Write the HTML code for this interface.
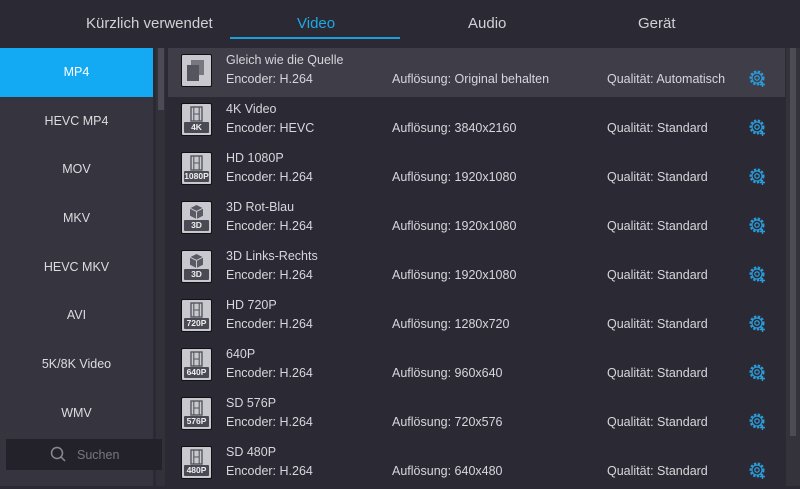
<!DOCTYPE html><html><head><style>
body{margin:0;width:800px;height:486px;background:#2b2a34;font-family:"Liberation Sans",sans-serif;overflow:hidden;position:relative;color:#d6d6dc}
.tab{position:absolute;top:15px;font-size:15px;color:#d0d0d6}
.side{position:absolute;left:0;top:48px;width:153px;height:438px;background:#36343f}
.si{height:48.7px;line-height:48.7px;text-align:center;font-size:12.5px;color:#dcdce0}
.si.a{background:#14aaf3;color:#fff}
.row{position:absolute;left:168px;width:617px;height:49px;font-size:12.5px}
.row.h{background:#3e3d48}
.ic{position:absolute;left:13px;top:6px;width:29px;height:31px;border:1px solid #111;background:#c8c8ce;border-radius:2px}
.lb{position:absolute;left:2px;right:2px;bottom:2px;height:11px;background:#4a4a55;color:#eee;font-size:8.5px;line-height:11px;text-align:center;font-weight:bold;border-radius:1px}
.t{position:absolute;left:58px;top:5px}
.e{position:absolute;left:58px;top:24px}
.r{position:absolute;left:224px;top:24px}
.q{position:absolute;left:439px;top:24px}
.g{position:absolute;left:580px;top:21px}
</style></head><body>
<div class="tab" style="left:86px">Kürzlich verwendet</div>
<div class="tab" style="left:297px;color:#1ea8e6">Video</div>
<div style="position:absolute;left:230px;top:37px;width:170px;height:2px;background:#1b9fdc"></div>
<div class="tab" style="left:468px">Audio</div>
<div class="tab" style="left:638px">Gerät</div>
<div class="side">
<div class="si a">MP4</div><div class="si">HEVC MP4</div><div class="si">MOV</div><div class="si">MKV</div><div class="si">HEVC MKV</div><div class="si">AVI</div><div class="si">5K/8K Video</div><div class="si">WMV</div>
</div>
<div style="position:absolute;left:156px;top:48px;width:9px;height:438px;background:#323139"></div>
<div style="position:absolute;left:158px;top:48px;width:6px;height:62px;background:#4b4a55"></div>
<div style="position:absolute;left:6px;top:439px;width:156px;height:31px;background:#23222a"></div>
<svg style="position:absolute;left:50px;top:446px" width="16" height="16"><circle cx="7" cy="7" r="5.5" fill="none" stroke="#8a8a92" stroke-width="1.5"/><path d="M11 11l4 4" stroke="#8a8a92" stroke-width="1.5"/></svg>
<div style="position:absolute;left:77px;top:448px;font-size:12.5px;color:#777780">Suchen</div>
<div style="position:absolute;left:786px;top:48px;width:14px;height:438px;background:#34333c"></div>
<div style="position:absolute;left:790px;top:48px;width:6px;height:388px;background:#4c4b56"></div>
<svg width="0" height="0" style="position:absolute"><defs>
<g id="gear"><circle cx="9" cy="9" r="6.5" fill="none" stroke="#2a9bd8" stroke-width="2" stroke-dasharray="2.4 1.5"/><circle cx="9" cy="9" r="5" fill="none" stroke="#2a9bd8" stroke-width="1.2"/><circle cx="9" cy="9" r="2.2" fill="none" stroke="#2a9bd8" stroke-width="1.3"/><path d="M12 15.5h5M14.5 13v5" stroke="#2a9bd8" stroke-width="1.4"/></g>
<g id="film"><rect x="9" y="3" width="11" height="14" fill="none" stroke="#55555e" stroke-width="1.4"/><path d="M11.8 3v14M17.2 3v14M11.8 10h5.4" stroke="#55555e" stroke-width="1.1"/></g>
<g id="cube"><path d="M14.5 3l6.5 3.2v7.6l-6.5 3.2-6.5-3.2V6.2z" fill="#5a5a64"/><path d="M8 6.2l6.5 3.2 6.5-3.2M14.5 9.4v7.6" stroke="#c8c8ce" stroke-width="1" fill="none"/></g>
</defs></svg>
<div class="row h" style="top:48px"><div class="ic"><div style="position:absolute;left:9px;top:5px;width:13px;height:15px;background:#77777f"></div><div style="position:absolute;left:5px;top:10px;width:12px;height:16px;background:#55555e"></div></div><div class="t">Gleich wie die Quelle</div><div class="e">Encoder: H.264</div><div class="r">Auflösung: Original behalten</div><div class="q">Qualität: Automatisch</div><svg class="g" width="20" height="20"><use href="#gear"/></svg></div>
<div class="row" style="top:97px"><div class="ic"><svg width="29" height="19"><use href="#film"/></svg><div class="lb">4K</div></div><div class="t">4K Video</div><div class="e">Encoder: HEVC</div><div class="r">Auflösung: 3840x2160</div><div class="q">Qualität: Standard</div><svg class="g" width="20" height="20"><use href="#gear"/></svg></div>
<div class="row" style="top:146px"><div class="ic"><svg width="29" height="19"><use href="#film"/></svg><div class="lb">1080P</div></div><div class="t">HD 1080P</div><div class="e">Encoder: H.264</div><div class="r">Auflösung: 1920x1080</div><div class="q">Qualität: Standard</div><svg class="g" width="20" height="20"><use href="#gear"/></svg></div>
<div class="row" style="top:195px"><div class="ic"><svg width="29" height="19"><use href="#cube"/></svg><div class="lb">3D</div></div><div class="t">3D Rot-Blau</div><div class="e">Encoder: H.264</div><div class="r">Auflösung: 1920x1080</div><div class="q">Qualität: Standard</div><svg class="g" width="20" height="20"><use href="#gear"/></svg></div>
<div class="row" style="top:244px"><div class="ic"><svg width="29" height="19"><use href="#cube"/></svg><div class="lb">3D</div></div><div class="t">3D Links-Rechts</div><div class="e">Encoder: H.264</div><div class="r">Auflösung: 1920x1080</div><div class="q">Qualität: Standard</div><svg class="g" width="20" height="20"><use href="#gear"/></svg></div>
<div class="row" style="top:293px"><div class="ic"><svg width="29" height="19"><use href="#film"/></svg><div class="lb">720P</div></div><div class="t">HD 720P</div><div class="e">Encoder: H.264</div><div class="r">Auflösung: 1280x720</div><div class="q">Qualität: Standard</div><svg class="g" width="20" height="20"><use href="#gear"/></svg></div>
<div class="row" style="top:342px"><div class="ic"><svg width="29" height="19"><use href="#film"/></svg><div class="lb">640P</div></div><div class="t">640P</div><div class="e">Encoder: H.264</div><div class="r">Auflösung: 960x640</div><div class="q">Qualität: Standard</div><svg class="g" width="20" height="20"><use href="#gear"/></svg></div>
<div class="row" style="top:391px"><div class="ic"><svg width="29" height="19"><use href="#film"/></svg><div class="lb">576P</div></div><div class="t">SD 576P</div><div class="e">Encoder: H.264</div><div class="r">Auflösung: 720x576</div><div class="q">Qualität: Standard</div><svg class="g" width="20" height="20"><use href="#gear"/></svg></div>
<div class="row" style="top:440px"><div class="ic"><svg width="29" height="19"><use href="#film"/></svg><div class="lb">480P</div></div><div class="t">SD 480P</div><div class="e">Encoder: H.264</div><div class="r">Auflösung: 640x480</div><div class="q">Qualität: Standard</div><svg class="g" width="20" height="20"><use href="#gear"/></svg></div>
</body></html>
